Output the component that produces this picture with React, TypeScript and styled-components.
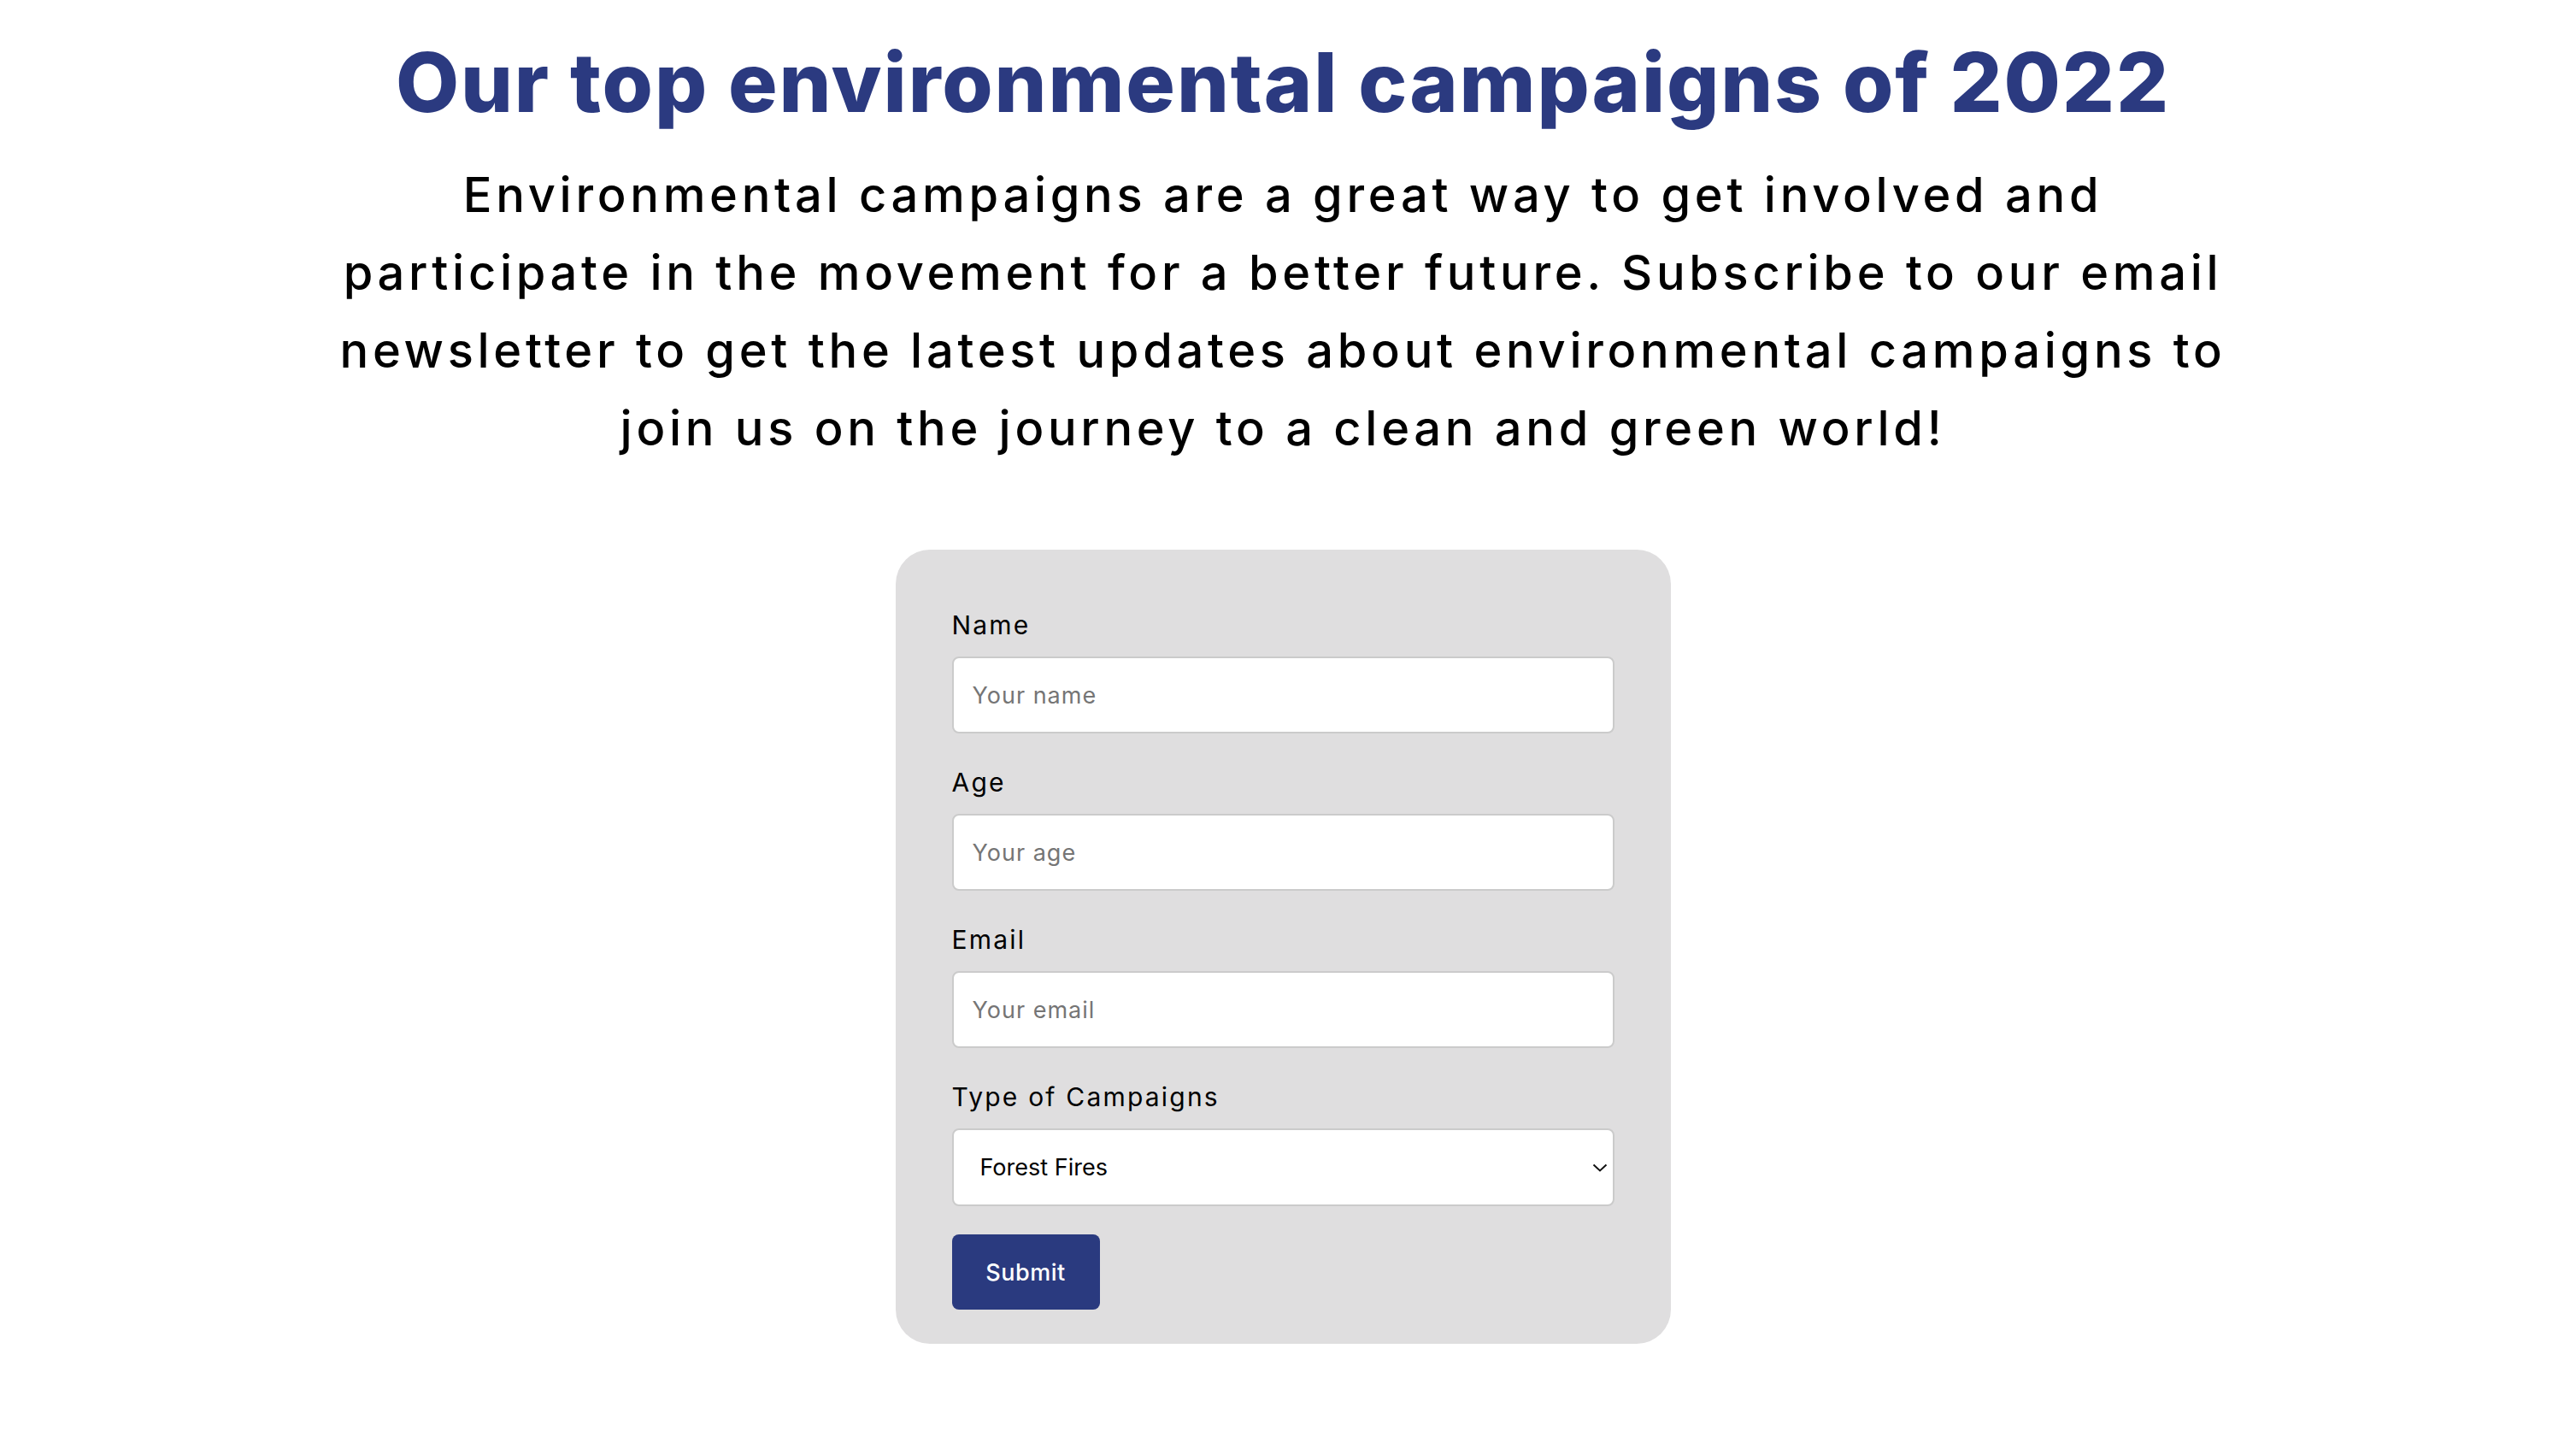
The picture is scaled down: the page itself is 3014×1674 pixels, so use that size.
import React, { useState } from 'react';
import styled, { createGlobalStyle } from 'styled-components';

const GlobalStyle = createGlobalStyle`
  html, body {
    margin: 0;
    padding: 0;
    background: #ffffff;
  }
  body {
    font-family: Inter, "Noto Sans", sans-serif;
    color: #000000;
  }
  * {
    box-sizing: border-box;
  }
`;

const Page = styled.main`
  display: flex;
  flex-direction: column;
  align-items: center;
  padding: 39px 12px 100px 0;
`;

const Title = styled.h1`
  margin: 0;
  font-size: 96px;
  line-height: 115px;
  font-weight: 800;
  color: #2b3a80;
  text-align: center;
  letter-spacing: 1.9px;
  white-space: nowrap;
`;

const Intro = styled.p`
  margin: 29px 0 0;
  font-size: 56px;
  line-height: 91px;
  font-weight: 500;
  letter-spacing: 4.7px;
  text-align: center;
  white-space: nowrap;
`;

const Card = styled.form`
  margin-top: 96px;
  width: 907px;
  padding: 66px 66px 40px;
  border-radius: 40px;
  background: #dfdedf;
  display: flex;
  flex-direction: column;
`;

const Field = styled.div<{ $last?: boolean }>`
  display: flex;
  flex-direction: column;
  gap: 14px;
  margin-bottom: ${(p) => (p.$last ? '33px' : '35px')};
`;

const Label = styled.label`
  font-size: 30px;
  line-height: 45px;
  font-weight: 400;
  letter-spacing: 2.2px;
  color: #000000;
`;

const Input = styled.input`
  height: 90px;
  width: 100%;
  padding: 0 22px;
  border: 2px solid #cbcbcb;
  border-radius: 8px;
  background: #ffffff;
  font-family: inherit;
  font-size: 27px;
  letter-spacing: 1px;
  color: #000000;
  outline: none;

  &::placeholder {
    color: #757575;
  }
`;

const SelectWrap = styled.div`
  position: relative;
  width: 100%;
`;

const Select = styled.select`
  appearance: none;
  -webkit-appearance: none;
  height: 91px;
  width: 100%;
  padding: 0 50px 0 31px;
  border: 2px solid #cbcbcb;
  border-radius: 8px;
  background: #ffffff;
  font-family: inherit;
  font-size: 27px;
  color: #000000;
  outline: none;
`;

const Chevron = styled.svg`
  position: absolute;
  right: 8px;
  top: 50%;
  transform: translateY(-50%);
  pointer-events: none;
`;

const SubmitButton = styled.button`
  align-self: flex-start;
  width: 173px;
  height: 88px;
  border: none;
  border-radius: 8px;
  background: #2a3a7f;
  color: #ffffff;
  font-family: inherit;
  font-size: 27px;
  font-weight: 500;
  letter-spacing: 0.5px;
  cursor: pointer;
`;

const campaigns = ['Forest Fires', 'Plastic Pollution', 'Climate Change', 'Deforestation'];

export default function App() {
  const [campaign, setCampaign] = useState(campaigns[0]);

  return (
    <>
      <GlobalStyle />
      <Page>
        <Title>Our top environmental campaigns of 2022</Title>
        <Intro>
          Environmental campaigns are a great way to get involved and
          <br />
          participate in the movement for a better future. Subscribe to our email
          <br />
          newsletter to get the latest updates about environmental campaigns to
          <br />
          join us on the journey to a clean and green world!
        </Intro>

        <Card onSubmit={(e) => e.preventDefault()}>
          <Field>
            <Label htmlFor="name">Name</Label>
            <Input id="name" type="text" placeholder="Your name" />
          </Field>
          <Field>
            <Label htmlFor="age">Age</Label>
            <Input id="age" type="text" placeholder="Your age" />
          </Field>
          <Field>
            <Label htmlFor="email">Email</Label>
            <Input id="email" type="email" placeholder="Your email" />
          </Field>
          <Field $last>
            <Label htmlFor="campaign">Type of Campaigns</Label>
            <SelectWrap>
              <Select
                id="campaign"
                value={campaign}
                onChange={(e) => setCampaign(e.target.value)}
              >
                {campaigns.map((c) => (
                  <option key={c} value={c}>
                    {c}
                  </option>
                ))}
              </Select>
              <Chevron width="18" height="10" viewBox="0 0 18 10" fill="none">
                <path d="M1.5 1.5 L9 8.5 L16.5 1.5" stroke="#111" strokeWidth="2" />
              </Chevron>
            </SelectWrap>
          </Field>
          <SubmitButton type="submit">Submit</SubmitButton>
        </Card>
      </Page>
    </>
  );
}
